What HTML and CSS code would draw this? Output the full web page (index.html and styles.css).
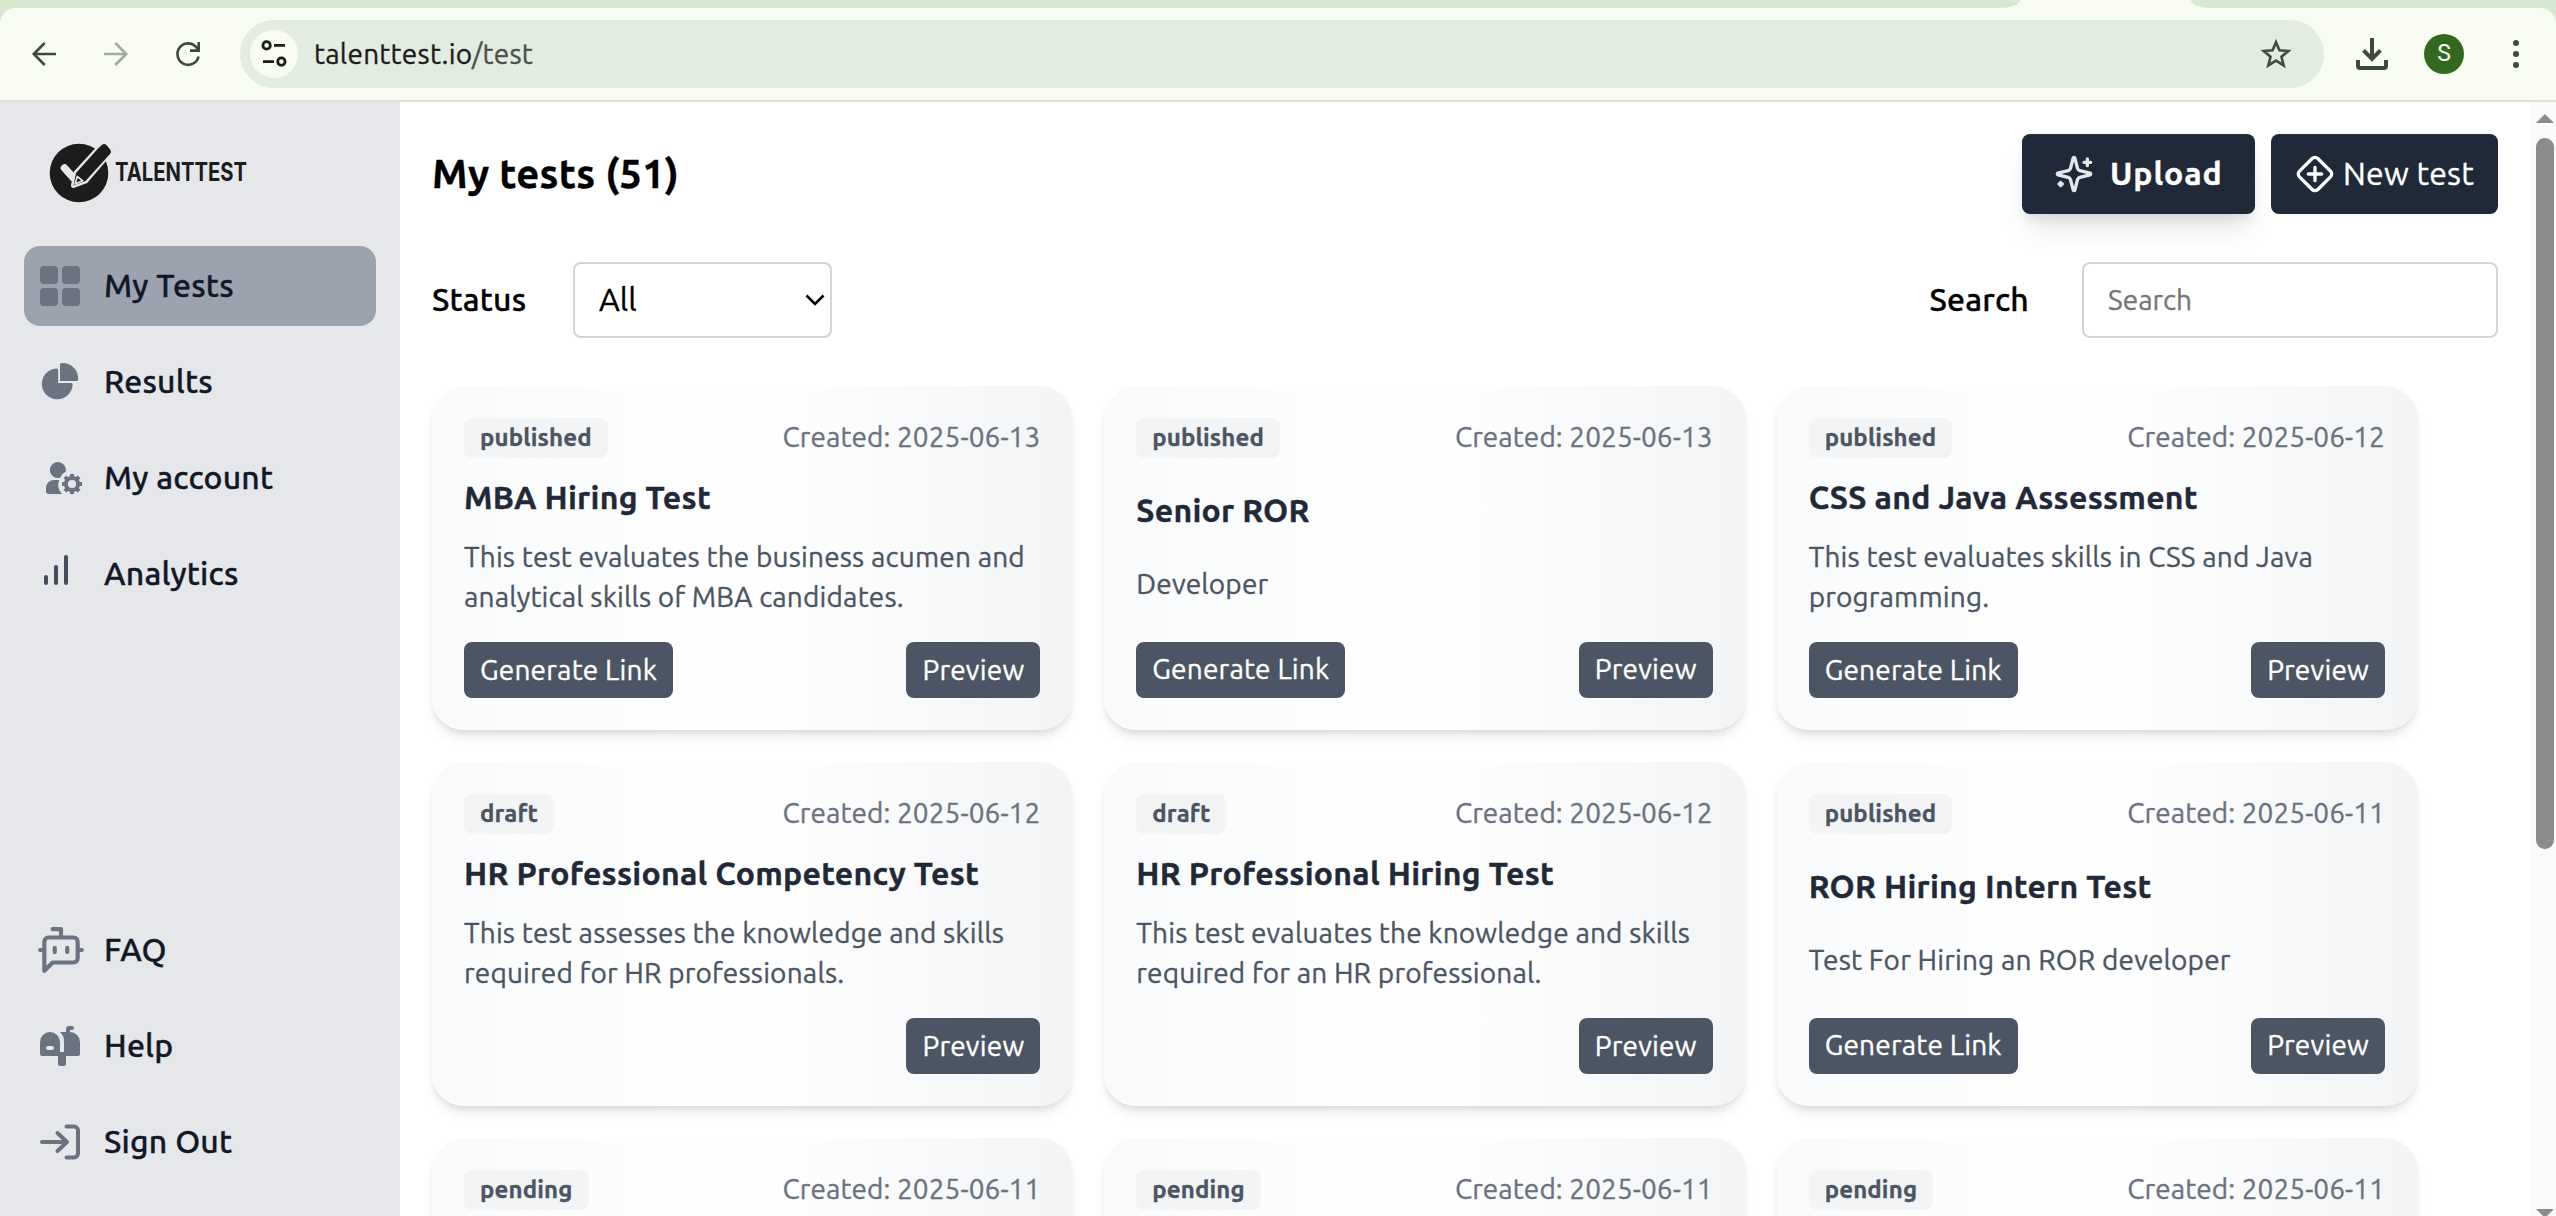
FILE: index.html
```html
<!DOCTYPE html>
<html lang="en">
<head>
<meta charset="utf-8">
<title>TalentTest</title>
<link rel="stylesheet" href="styles.css">
</head>
<body>
<header class="browser">
  <div class="tabstrip"><div class="tabs-left"></div><div class="tabs-right"></div></div>
  <div class="toolbar">
    <div class="nav-buttons">
      <svg width="24" height="24" viewBox="0 0 24 24" fill="none" stroke="#3c4b38" stroke-width="2.6"><path d="M24 12H2M12.7 1 1.8 12l10.9 11"/></svg>
      <svg width="24" height="24" viewBox="0 0 24 24" fill="none" stroke="#a3a8a0" stroke-width="2.6"><path d="M0 12h22M11.3 1l10.9 11-10.9 11"/></svg>
      <svg width="24" height="24" viewBox="0 0 24 24" fill="none" stroke="#3c4b38" stroke-width="2.6"><path d="M22.6 14.5A10.7 10.7 0 1 1 20 4.8l2.6 3.4M22.7 0v8.6H14"/></svg>
    </div>
    <div class="omnibox">
      <span class="site-info"><svg width="28" height="28" viewBox="0 0 28 28" fill="none" stroke="#1b1d1a" stroke-width="2.8"><circle cx="6.6" cy="5.4" r="3.7"/><path d="M14 5.4h11M3 21.6h11"/><circle cx="21.4" cy="21.6" r="3.7"/></svg></span>
      <span class="url">talenttest.io<span class="url-path">/test</span></span>
      <svg class="star" width="32" height="30" viewBox="0 0 32 30" fill="none" stroke="#454b43" stroke-width="2.7"><path d="M16 3.2l3.4 8.1 8.8.7-6.7 5.7 2.1 8.6-7.6-4.6-7.6 4.6 2.1-8.6L3.8 12l8.8-.7z"/></svg>
    </div>
    <svg class="download" width="32" height="32" viewBox="0 0 32 32" fill="none" stroke="#3c4b38" stroke-width="4"><path d="M16 0v21M7.6 12.4 16 20.8l8.4-8.4"/><path d="M2 22v6a2 2 0 0 0 2 2h24a2 2 0 0 0 2-2v-6"/></svg>
    <span class="avatar">S</span>
    <svg class="menu" width="6" height="28" viewBox="0 0 6 28" fill="#3c4b38"><circle cx="3" cy="3" r="3"/><circle cx="3" cy="14" r="3"/><circle cx="3" cy="25" r="3"/></svg>
  </div>
</header>

<div class="app">
  <aside class="sidebar">
    <svg class="logo" width="210" height="64" viewBox="0 0 210 64">
      <circle cx="31" cy="33" r="29.3" fill="#1c1c1c"/>
      <path d="M16.500 28l9 10" stroke="#e5e7eb" stroke-width="7.5" stroke-linecap="round" fill="none"/>
      <path d="M50.500 8.500 54 5.800a3.500 3.500 0 0 1 4.600.4l2.600 3.300a3.500 3.500 0 0 1-.2 4.400L37.500 41 25.500 45.500 28 33z" fill="#1c1c1c" stroke="#e5e7eb" stroke-width="5" stroke-linejoin="round"/>
      <path d="M50 8.500 54 4.800a3.500 3.500 0 0 1 4.600.4l3.600 4.300a3.500 3.500 0 0 1-.2 4.400L37.500 41 25.500 45.500 28 33z" fill="#1c1c1c"/>
      <path d="M29.300 36.500 27 44l7.800-3.200z" fill="none" stroke="#e5e7eb" stroke-width="1.700" stroke-linejoin="round"/>
      <text class="logo-text" x="67" y="41" textLength="132" lengthAdjust="spacingAndGlyphs">TALENTTEST</text>
    </svg>
    <nav class="links">
      <a class="link active"><svg width="40" height="40" viewBox="0 0 40 40" fill="#6b7280"><rect width="18" height="18" rx="4"/><rect x="22" width="18" height="18" rx="4"/><rect y="22" width="18" height="18" rx="4"/><rect x="22" y="22" width="18" height="18" rx="4"/></svg><span>My Tests</span></a>
      <a class="link"><svg width="40" height="40" viewBox="0 0 22 21" fill="#6b7280"><path d="M16.975 11H10V4.025a1 1 0 0 0-1.066-.998 8.500 8.500 0 1 0 9.039 9.039.999.999 0 0 0-1-1.066h.002Z"/><path d="M12.500 0c-.157 0-.311.010-.565.027A1 1 0 0 0 11 1.020V10h8.975a1 1 0 0 0 1-.935c.013-.188.028-.374.028-.565A8.510 8.510 0 0 0 12.500 0Z"/></svg><span>Results</span></a>
      <a class="link"><svg width="40" height="40" viewBox="0 0 40 40" fill="#6b7280"><path d="M18 4a8 8 0 0 1 7.800 9.500 14 14 0 0 0-5.800 6.200A8 8 0 1 1 18 4z"/><path d="M14 22h5.300a13 13 0 0 0 2.700 14H9a3 3 0 0 1-3-3v-3a8 8 0 0 1 8-8z"/><circle cx="32" cy="26" r="6.100" fill="none" stroke="#6b7280" stroke-width="4"/><path d="M32 16v3.500M32 32.500V36M22 26h3.500M38.500 26H42M24.900 18.900l2.500 2.500M36.600 30.600l2.500 2.500M39.100 18.900l-2.500 2.500M27.400 30.600l-2.500 2.500" stroke="#6b7280" stroke-width="4"/></svg><span>My account</span></a>
      <a class="link"><svg width="40" height="40" viewBox="0 0 40 40" stroke="#434b5d" stroke-width="4" stroke-linecap="round"><path d="M6 23v6M16 13v16M26 3v26"/></svg><span>Analytics</span></a>
    </nav>
    <nav class="links links-bottom">
      <a class="link"><svg class="bot" width="50" height="50" viewBox="0 0 24 24" fill="none" stroke="#6b7280" stroke-width="2" stroke-linecap="round" stroke-linejoin="round"><path d="M12 6V2H8M8 18l-4 4V8a2 2 0 0 1 2-2h12a2 2 0 0 1 2 2v8a2 2 0 0 1-2 2ZM2 12h2M9 11v2M15 11v2M20 12h2"/></svg><span>FAQ</span></a>
      <a class="link"><svg width="40" height="40" viewBox="0 0 40 40" fill="#6b7280"><path fill-rule="evenodd" d="M10 6a10 10 0 0 1 10 10v10h4V16a13 13 0 0 0-4-10h6V3a3 3 0 0 1 3-3h3a2 2 0 0 1 0 4h-2v2a10 10 0 0 1 10 10v12a2 2 0 0 1-2 2H26v8a2 2 0 0 1-2 2h-4a2 2 0 0 1-2-2v-8H2a2 2 0 0 1-2-2V16A10 10 0 0 1 10 6zM8 20a2 2 0 0 0 0 4h4a2 2 0 0 0 0-4z"/></svg><span>Help</span></a>
      <a class="link"><svg width="40" height="40" viewBox="0 0 40 40" fill="none" stroke="#6b7280" stroke-width="4" stroke-linecap="round" stroke-linejoin="round"><path d="M2 20h25M17.500 11l9.500 9-9.500 9M26.500 4.400H34a4 4 0 0 1 4 4v23.200a4 4 0 0 1-4 4h-7.500"/></svg><span>Sign Out</span></a>
    </nav>
  </aside>

  <main class="main">
    <div class="heading">
      <h1>My tests (51)</h1>
      <div class="actions">
        <button class="btn-dark upload"><svg width="40" height="40" viewBox="0 0 24 24" fill="none" stroke="#e5e7eb" stroke-width="2" stroke-linecap="round" stroke-linejoin="round"><path d="M9.937 15.500A2 2 0 0 0 8.500 14.063l-6.135-1.582a.5.5 0 0 1 0-.962L8.500 9.936A2 2 0 0 0 9.937 8.500l1.582-6.135a.5.5 0 0 1 .963 0L14.063 8.500A2 2 0 0 0 15.500 9.937l6.135 1.581a.5.5 0 0 1 0 .964L15.500 14.063a2 2 0 0 0-1.437 1.437l-1.582 6.135a.5.5 0 0 1-.963 0zM20 3v4M22 5h-4M4 17v2M5 18H3"/></svg><span>Upload</span></button>
        <button class="btn-dark new-test"><svg width="40" height="40" viewBox="0 0 24 24" fill="none" stroke="#fff" stroke-width="2" stroke-linecap="round" stroke-linejoin="round"><path d="M12 8v8M2.700 10.300a2.410 2.410 0 0 0 0 3.410l7.590 7.590a2.410 2.410 0 0 0 3.410 0l7.590-7.590a2.410 2.410 0 0 0 0-3.410L13.700 2.710a2.410 2.410 0 0 0-3.410 0zM8 12h8"/></svg><span>New test</span></button>
      </div>
    </div>
    <div class="filters">
      <label>Status</label>
      <div class="select"><span>All</span><svg width="20" height="12" viewBox="0 0 20 12" fill="none" stroke="#000" stroke-width="2.600"><path d="M1.500 1.500 10 10l8.500-8.500"/></svg></div>
      <label class="search-label">Search</label>
      <input class="search" placeholder="Search">
    </div>
    <div class="cards">
      <article class="card">
        <div class="row"><span class="badge">published</span><span class="date">Created: 2025-06-13</span></div>
        <h2>MBA Hiring Test</h2>
        <p>This test evaluates the business acumen and analytical skills of MBA candidates.</p>
        <div class="row"><button class="btn">Generate Link</button><button class="btn preview">Preview</button></div>
      </article>
      <article class="card">
        <div class="row"><span class="badge">published</span><span class="date">Created: 2025-06-13</span></div>
        <h2>Senior ROR</h2>
        <p>Developer</p>
        <div class="row"><button class="btn">Generate Link</button><button class="btn preview">Preview</button></div>
      </article>
      <article class="card">
        <div class="row"><span class="badge">published</span><span class="date">Created: 2025-06-12</span></div>
        <h2>CSS and Java Assessment</h2>
        <p>This test evaluates skills in CSS and Java programming.</p>
        <div class="row"><button class="btn">Generate Link</button><button class="btn preview">Preview</button></div>
      </article>
      <article class="card">
        <div class="row"><span class="badge">draft</span><span class="date">Created: 2025-06-12</span></div>
        <h2>HR Professional Competency Test</h2>
        <p>This test assesses the knowledge and skills required for HR professionals.</p>
        <div class="row"><button class="btn preview">Preview</button></div>
      </article>
      <article class="card">
        <div class="row"><span class="badge">draft</span><span class="date">Created: 2025-06-12</span></div>
        <h2>HR Professional Hiring Test</h2>
        <p>This test evaluates the knowledge and skills required for an HR professional.</p>
        <div class="row"><button class="btn preview">Preview</button></div>
      </article>
      <article class="card">
        <div class="row"><span class="badge">published</span><span class="date">Created: 2025-06-11</span></div>
        <h2>ROR Hiring Intern Test</h2>
        <p>Test For Hiring an ROR developer</p>
        <div class="row"><button class="btn">Generate Link</button><button class="btn preview">Preview</button></div>
      </article>
      <article class="card"><div class="row"><span class="badge">pending</span><span class="date">Created: 2025-06-11</span></div></article>
      <article class="card"><div class="row"><span class="badge">pending</span><span class="date">Created: 2025-06-11</span></div></article>
      <article class="card"><div class="row"><span class="badge">pending</span><span class="date">Created: 2025-06-11</span></div></article>
    </div>
  </main>

  <div class="scrollbar"><i class="arrow up"></i><i class="thumb"></i><i class="arrow down"></i></div>
</div>
</body>
</html>
```
FILE: styles.css
```css
* { box-sizing: border-box; margin: 0; padding: 0; }

body {
  width: 2556px;
  height: 1216px;
  overflow: hidden;
  display: flex;
  flex-direction: column;
  background: #fff;
  font-family: Ubuntu, "Noto Sans", sans-serif;
  -webkit-text-stroke-width: .35px;
}

svg { display: block; flex: none; overflow: visible; }
button { border: 0; font-family: inherit; }

/* Browser chrome */
.browser { flex: none; background: #d6e8d0; }
.tabstrip { display: flex; justify-content: space-between; height: 8px; background: #f8fbf1; }
.tabs-left { width: 2020px; background: #d6e8d0; border-bottom-right-radius: 20px 8px; }
.tabs-right { width: 365px; background: #d6e8d0; border-bottom-left-radius: 20px 8px; }
.toolbar {
  display: flex;
  align-items: center;
  height: 94px;
  padding: 0 37px 0 32px;
  background: #f8fbf1;
  border-bottom: 2px solid #dfe3db;
  border-radius: 16px 16px 0 0;
}
.nav-buttons { display: flex; gap: 48px; margin-right: 40px; }
.omnibox {
  display: flex;
  align-items: center;
  width: 2084px;
  height: 68px;
  padding: 0 32px 0 10px;
  border-radius: 34px;
  background: #e3ece0;
}
.site-info {
  display: flex;
  align-items: center;
  justify-content: center;
  width: 48px;
  height: 48px;
  margin-right: 16px;
  border-radius: 50%;
  background: #f8fbf1;
}
.url { flex: 1; font-size: 28px; line-height: 40px; letter-spacing: .25px; color: #1b1d1a; }
.url-path { color: #4b5148; }
.download { margin-left: 32px; }
.avatar {
  width: 40px;
  height: 40px;
  margin: 0 49px 0 36px;
  border-radius: 50%;
  background: #33691e;
  color: #fff;
  font: 23px/40px Roboto, sans-serif;
  text-align: center;
  -webkit-text-stroke-width: 0;
}

/* App shell */
.app { flex: 1; display: flex; min-height: 0; }
.sidebar {
  display: flex;
  flex-direction: column;
  width: 400px;
  padding: 38px 24px 34px;
  background: #e5e7eb;
}
.logo { margin: 0 0 42px 24px; }
.logo-text { font: 700 25px Inter, sans-serif; fill: #1c1c1c; }
.links { display: flex; flex-direction: column; gap: 16px; }
.links-bottom { margin-top: auto; }
.link {
  display: flex;
  align-items: center;
  gap: 24px;
  height: 80px;
  padding: 0 16px;
  border-radius: 16px;
  font-size: 32px;
  font-weight: 500;
  letter-spacing: .2px;
  color: #111827;
}
.link span, .btn-dark span, .select span { padding-bottom: 2px; }
.link.active { background: #9ca3af; }
.bot { margin: 0 -6px 0 -4px; }

.main { flex: 1; padding: 32px 32px 0; overflow: hidden; }
.heading { display: flex; justify-content: space-between; align-items: center; height: 80px; }
h1 { padding-bottom: 2px; font-size: 40px; font-weight: 700; letter-spacing: .3px; }
.actions { display: flex; gap: 16px; }
.btn-dark {
  display: flex;
  align-items: center;
  height: 80px;
  border-radius: 8px;
  background: #1f2937;
  color: #fff;
  font-size: 32px;
}
.upload {
  width: 233px;
  padding-left: 32px;
  gap: 16px;
  font-weight: 700;
  letter-spacing: .9px;
  box-shadow: 0 20px 30px -6px rgba(0,0,0,.1), 0 8px 12px -4px rgba(0,0,0,.1);
}
.new-test { width: 227px; padding-left: 24px; gap: 8px; letter-spacing: .2px; }

.filters { display: flex; align-items: center; height: 76px; margin: 48px 0; font-size: 32px; }
.filters label { padding-bottom: 2px; font-weight: 500; letter-spacing: .2px; }
.select, .search {
  height: 76px;
  border: 2px solid #d1d5db;
  border-radius: 8px;
  background: #fff;
}
.filters label:first-child { width: 141px; }
.select {
  display: flex;
  align-items: center;
  justify-content: space-between;
  width: 259px;
  padding: 0 5px 0 24px;
}
.search-label { margin-left: auto; }
.search { width: 416px; margin-left: 53px; padding: 0 24px 2px; font: 28px Ubuntu, "Noto Sans", sans-serif; }
.search::placeholder { color: #757575; opacity: 1; }

/* Test cards */
.cards { display: grid; grid-template-columns: repeat(3, 1fr); grid-auto-rows: 344px; gap: 32px; width: 1985px; }
.card {
  display: flex;
  flex-direction: column;
  justify-content: space-between;
  padding: 32px;
  border-radius: 32px;
  background: linear-gradient(to right, #f9fafb, #fff, #f3f4f6);
  box-shadow: 0 8px 12px -2px rgba(0,0,0,.1), 0 4px 8px -4px rgba(0,0,0,.1);
}
.row { display: flex; justify-content: space-between; align-items: center; }
.badge {
  height: 40px;
  padding: 0 16px;
  border-radius: 8px;
  background: #f3f4f6;
  color: #4b5563;
  font-size: 24px;
  font-weight: 700;
  line-height: 39px;
  letter-spacing: .15px;
}
.date { height: 40px; font-size: 28px; line-height: 38px; letter-spacing: .08px; color: #6b7280; }
h2 { margin: -1px 0 1px; font-size: 32px; font-weight: 700; line-height: 32px; letter-spacing: .25px; color: #1f2937; }
.card p { margin: -1px 0 1px; font-size: 28px; line-height: 40px; letter-spacing: .17px; color: #4b5563; }
.btn {
  height: 56px;
  padding: 0 16px 2px;
  border-radius: 8px;
  background: #4b5563;
  color: #fff;
  font-size: 28px;
  letter-spacing: .2px;
}
.preview { margin-left: auto; }

/* Page scrollbar */
.scrollbar {
  display: flex;
  flex-direction: column;
  align-items: center;
  width: 26px;
  padding: 12px 0 0 4px;
  overflow: hidden;
  background: #fafafa;
}
.arrow { flex: none; border: 9px solid transparent; }
.up { border-top: 0; border-bottom-color: #8b8b8b; }
.down { border-bottom: 0; border-top-color: #8b8b8b; margin-top: 360px; }
.thumb { flex: none; width: 18px; height: 711px; margin-top: 15px; border-radius: 9px; background: #8b8b8b; }
```
